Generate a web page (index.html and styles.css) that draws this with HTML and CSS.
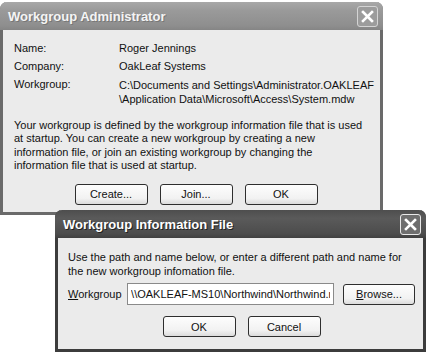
FILE: index.html
```html
<!DOCTYPE html>
<html lang="en">
<head>
  <meta charset="UTF-8">
  <title>Workgroup Administrator</title>
  <link rel="stylesheet" href="styles.css">
</head>
<body>

  <!-- Workgroup Administrator (inactive) -->
  <div class="window inactive admin-window">
    <div class="titlebar">
      <span class="title">Workgroup Administrator</span>
      <span class="close-btn">
        <svg width="19" height="19" viewBox="0 0 19 19"><path d="M5 5 L14 14 M14 5 L5 14" stroke="#fff" stroke-width="2.6" stroke-linecap="square"/></svg>
      </span>
    </div>
    <div class="window-body">
      <div class="info">
        <span>Name:</span><span>Roger Jennings</span>
        <span>Company:</span><span>OakLeaf Systems</span>
        <span>Workgroup:</span><span class="path">C:\Documents and Settings\Administrator.OAKLEAF<br>\Application Data\Microsoft\Access\System.mdw</span>
      </div>
      <p class="desc">Your workgroup is defined by the workgroup information file that is used<br>at startup. You can create a new workgroup by creating a new<br>information file, or join an existing workgroup by changing the<br>information file that is used at startup.</p>
      <div class="buttons">
        <button>Create...</button>
        <button>Join...</button>
        <button>OK</button>
      </div>
    </div>
  </div>

  <!-- Workgroup Information File (active) -->
  <div class="window file-window">
    <div class="titlebar">
      <span class="title">Workgroup Information File</span>
      <span class="close-btn">
        <svg width="19" height="19" viewBox="0 0 19 19"><path d="M5 5 L14 14 M14 5 L5 14" stroke="#fff" stroke-width="2.6" stroke-linecap="square"/></svg>
      </span>
    </div>
    <div class="window-body">
      <p class="desc">Use the path and name below, or enter a different path and name for<br>the new workgroup infomation file.</p>
      <div class="path-row">
        <label><u>W</u>orkgroup</label>
        <input type="text" value="\\OAKLEAF-MS10\Northwind\Northwind.mdw">
        <button><u>B</u>rowse...</button>
      </div>
      <div class="buttons">
        <button>OK</button>
        <button>Cancel</button>
      </div>
    </div>
  </div>

</body>
</html>
```

FILE: styles.css
```css
* {
  padding: 0;
  margin: 0;
  box-sizing: border-box;
}

body {
  width: 427px;
  height: 353px;
  background: #fff;
  font-family: 'Liberation Sans', Arial, sans-serif;
  font-size: 11px;
  color: #111;
  position: relative;
  overflow: hidden;
}

/* Windows */
.window {
  position: absolute;
  background: #ebebeb;
  border: 3px solid #6a6a6a;
  border-top: none;
  border-radius: 7px 7px 0 0;
  display: flex;
  flex-direction: column;
}

.admin-window {
  left: 0;
  top: 2px;
  width: 383px;
  height: 213px;
}

.file-window {
  left: 55px;
  top: 210px;
  width: 371px;
  height: 142px;
  border-color: #3c3c3c;
}

.titlebar {
  flex: none;
  height: 28px;
  margin: 0 -3px;
  padding: 0 5px 0 8px;
  border-radius: 7px 7px 0 0;
  background: linear-gradient(#4e4e4e, #5a5a5a 30%, #4c4c4c 85%, #404040);
  display: flex;
  align-items: center;
  justify-content: space-between;
}

.inactive .titlebar {
  background: linear-gradient(#a8a8a8, #9a9a9a 30%, #8e8e8e 85%, #858585);
}

.title {
  font-family: 'Liberation Sans', Arial, sans-serif;
  font-weight: bold;
  font-size: 13px;
  color: #fff;
  text-shadow: 1px 1px 0 #222;
}

.inactive .title {
  color: #f4f4f4;
  text-shadow: 1px 1px 0 #777;
}

.close-btn {
  width: 21px;
  height: 21px;
  border: 1px solid #e8e8e8;
  border-radius: 3px;
  background: #6e6e6e;
  display: flex;
}

.inactive .close-btn {
  background: #9c9c9c;
  border-color: #d4d4d4;
}

.window-body {
  flex: 1;
  padding: 12px 10px 0 11px;
}

/* Admin window */
.info {
  display: grid;
  grid-template-columns: 105px auto;
  row-gap: 5px;
  line-height: 13px;
  white-space: nowrap;
}

.info .path {
  line-height: 14px;
}

.admin-window .desc {
  margin-top: 13px;
  line-height: 13.4px;
  white-space: nowrap;
}

.buttons {
  display: flex;
  justify-content: center;
  gap: 12px;
}

.admin-window .buttons {
  margin-top: 11px;
  padding-left: 8px;
}

button {
  width: 73px;
  height: 21px;
  font-family: 'Liberation Sans', Arial, sans-serif;
  font-size: 11px;
  color: #111;
  border: 1px solid #2e2e2e;
  border-radius: 3px;
  background: linear-gradient(#fdfdfd, #f2f2f2 70%, #dcdcdc);
}

/* File window */
.file-window .window-body {
  padding: 12px 8px 0 10px;
}

.file-window .desc {
  line-height: 14px;
  white-space: nowrap;
}

.path-row {
  margin-top: 5px;
  display: flex;
  align-items: center;
}

.path-row label {
  width: 60px;
}

.path-row input {
  width: 210px;
  height: 22px;
  border: 1px solid #8a8a8a;
  padding: 0 3px;
  font-family: 'Liberation Sans', Arial, sans-serif;
  font-size: 11px;
  color: #111;
  background: #fff;
}

.path-row button {
  margin-left: 9px;
}

.file-window .buttons {
  margin-top: 11px;
}
```
